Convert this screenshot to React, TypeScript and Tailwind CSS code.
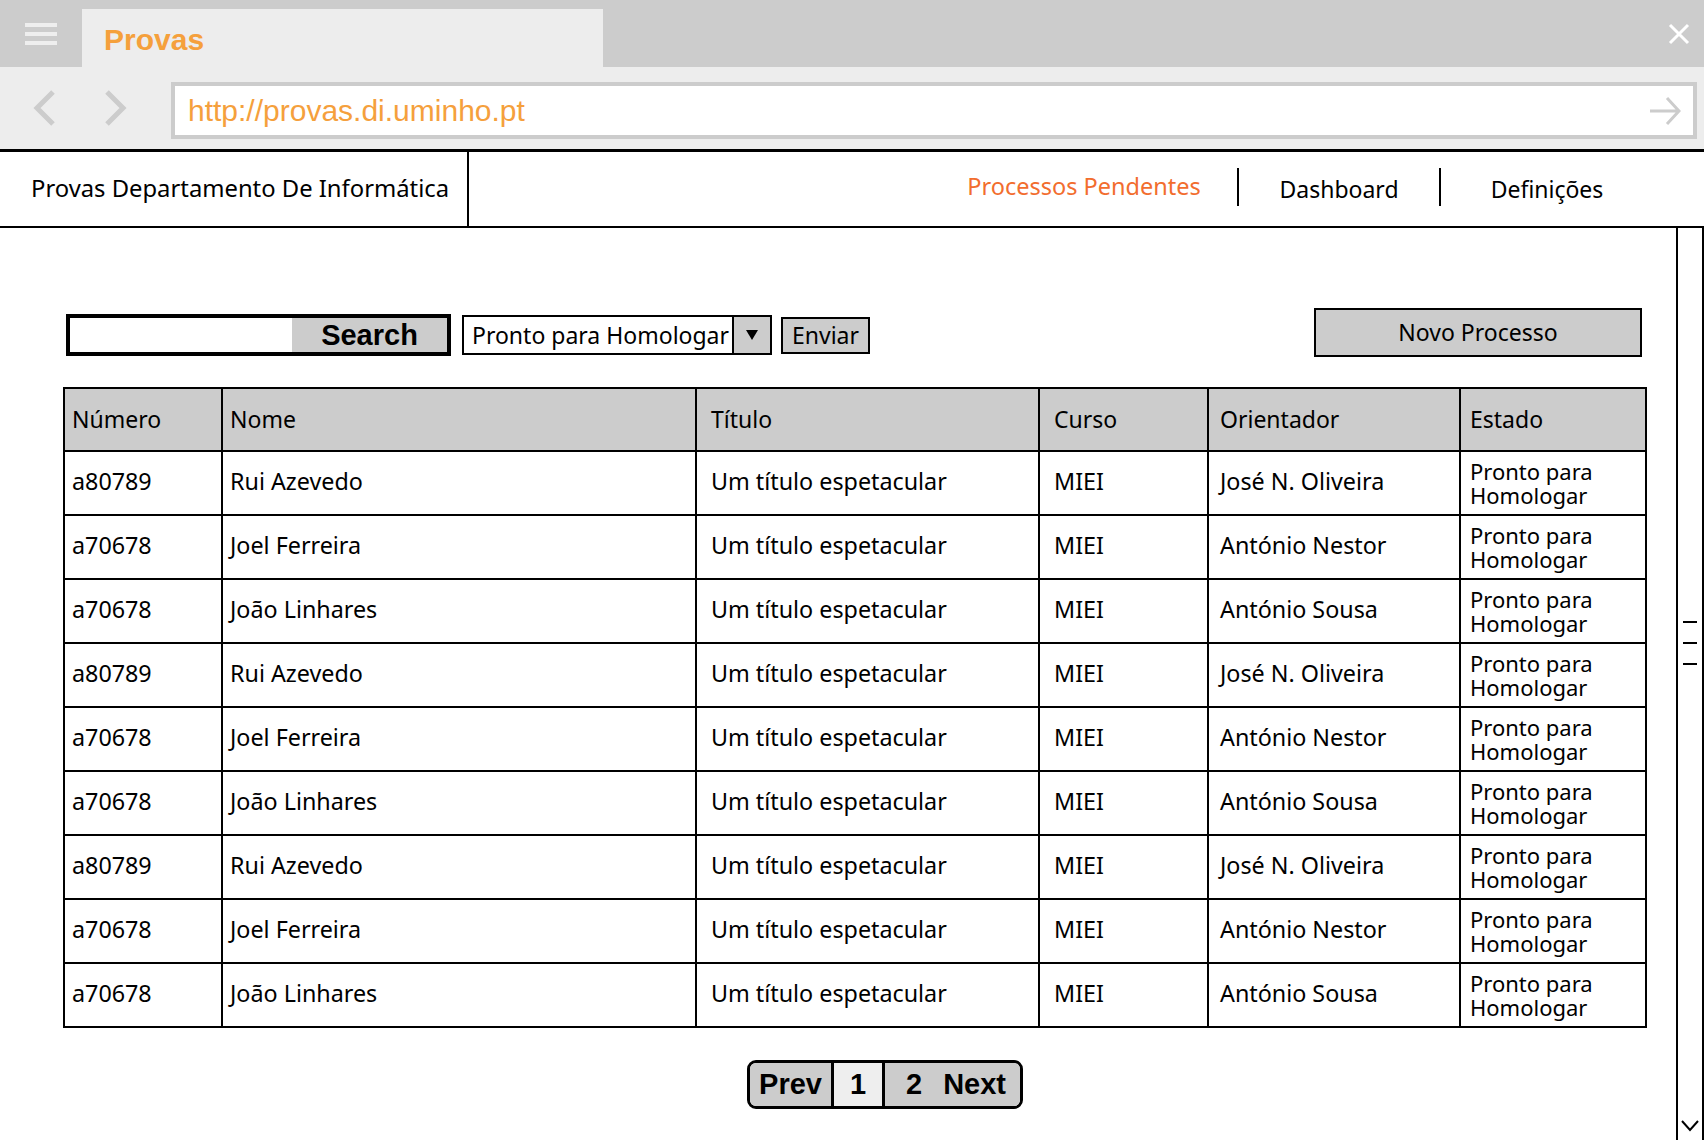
import React from "react";

const rows: [string, string, string][] = [
  ["a80789", "Rui Azevedo", "José N. Oliveira"],
  ["a70678", "Joel Ferreira", "António Nestor"],
  ["a70678", "João Linhares", "António Sousa"],
  ["a80789", "Rui Azevedo", "José N. Oliveira"],
  ["a70678", "Joel Ferreira", "António Nestor"],
  ["a70678", "João Linhares", "António Sousa"],
  ["a80789", "Rui Azevedo", "José N. Oliveira"],
  ["a70678", "Joel Ferreira", "António Nestor"],
  ["a70678", "João Linhares", "António Sousa"],
];

const colW = ["w-[158px]", "w-[474px]", "w-[343px]", "w-[169px]", "w-[252px]", "w-[186px]"];
const colPad = ["pl-[7px]", "pl-[7px]", "pl-[14px]", "pl-[14px]", "pl-[11px]", "pl-[9px]"];

export default function App() {
  return (
    <div className="w-[1704px] h-[1140px] overflow-hidden bg-white flex flex-col font-['Noto_Sans',sans-serif] text-black">
      {/* Title bar */}
      <div className="h-[67px] bg-[#cccccc] flex shrink-0">
        <div className="w-[82px] flex items-center justify-center">
          <svg width="34" height="26" viewBox="0 0 34 26">
            <rect x="1" y="2" width="32" height="4" fill="#eeeeee" />
            <rect x="1" y="11" width="32" height="4" fill="#eeeeee" />
            <rect x="1" y="20" width="32" height="4" fill="#eeeeee" />
          </svg>
        </div>
        <div className="mt-[9px] w-[521px] bg-[#ededed] flex items-center pl-[22px]">
          <span className="font-['Liberation_Sans',Arial,sans-serif] font-bold text-[30px] text-[#f5a03c] leading-none mt-[4px]">
            Provas
          </span>
        </div>
        <div className="flex-1 flex items-center justify-end pr-[14px]">
          <svg width="22" height="22" viewBox="0 0 22 22">
            <path d="M2 2 L20 20 M20 2 L2 20" stroke="#ffffff" strokeWidth="3" fill="none" />
          </svg>
        </div>
      </div>

      {/* Address bar */}
      <div className="h-[85px] bg-[#ededed] border-b-[3px] border-black flex items-start shrink-0">
        <div className="w-[171px] h-[82px] flex items-center">
          <svg className="ml-[32px]" width="24" height="38" viewBox="0 0 24 38">
            <polyline points="21,3 5,19 21,35" stroke="#cccccc" strokeWidth="5" fill="none" />
          </svg>
          <svg className="ml-[48px]" width="24" height="38" viewBox="0 0 24 38">
            <polyline points="3,3 19,19 3,35" stroke="#cccccc" strokeWidth="5" fill="none" />
          </svg>
        </div>
        <div className="mt-[15px] w-[1526px] h-[57px] bg-white border-[4px] border-[#cccccc] flex items-center pl-[13px] pr-[12px]">
          <span className="font-['Liberation_Sans',Arial,sans-serif] text-[30px] text-[#f5a03c] leading-none flex-1">
            http://provas.di.uminho.pt
          </span>
          <svg width="32" height="30" viewBox="0 0 32 30">
            <path d="M1 15 L30 15 M18 2 L30 15 L18 28" stroke="#cccccc" strokeWidth="3" fill="none" />
          </svg>
        </div>
      </div>

      {/* Nav */}
      <div className="h-[76px] border-b-2 border-black flex items-stretch shrink-0">
        <div className="w-[469px] border-r-2 border-black flex items-center pl-[31px]">
          <span className="text-[23.8px] leading-none whitespace-nowrap">Provas Departamento De Informática</span>
        </div>
        <div className="flex-1" />
        <div className="w-[306px] flex items-center justify-center">
          <span className="text-[23.5px] leading-none text-[#f26d2e] -mt-[4px] whitespace-nowrap">Processos Pendentes</span>
        </div>
        <div className="flex items-center">
          <div className="w-[2px] h-[38px] bg-black -mt-[4px]" />
        </div>
        <div className="w-[200px] flex items-center justify-center">
          <span className="text-[23px] leading-none">Dashboard</span>
        </div>
        <div className="flex items-center">
          <div className="w-[2px] h-[38px] bg-black -mt-[4px]" />
        </div>
        <div className="w-[212px] flex items-center justify-center">
          <span className="text-[23px] leading-none">Definições</span>
        </div>
        <div className="w-[51px]" />
      </div>

      {/* Content */}
      <div className="flex-1 flex min-h-0">
        <div className="flex-1 pl-[63px] pt-[80px] flex flex-col">
          {/* Controls */}
          <div className="flex items-end w-[1582px]">
            <div className="ml-[3px] mb-[1px] w-[385px] h-[42px] border-[4px] border-black flex">
              <div className="flex-1 bg-white" />
              <div className="w-[155px] bg-[#cccccc] flex items-center justify-center">
                <span className="font-['Liberation_Sans',Arial,sans-serif] font-bold text-[29px] leading-none">Search</span>
              </div>
            </div>
            <div className="ml-[11px] mb-[2px] w-[310px] h-[40px] border-2 border-black flex">
              <div className="flex-1 flex items-center pl-[8px] bg-white">
                <span className="text-[23px] leading-none whitespace-nowrap">Pronto para Homologar</span>
              </div>
              <div className="w-[38px] border-l-2 border-black bg-[#cccccc] flex items-center justify-center">
                <svg width="12" height="12" viewBox="0 0 12 12">
                  <path d="M0 1 L12 1 L6 11 Z" fill="#000000" />
                </svg>
              </div>
            </div>
            <div className="ml-[9px] mb-[3px] w-[89px] h-[37px] border-2 border-black bg-[#cccccc] flex items-center justify-center">
              <span className="text-[23px] leading-none">Enviar</span>
            </div>
            <div className="flex-1" />
            <div className="mr-[3px] w-[328px] h-[49px] border-2 border-black bg-[#cccccc] flex items-center justify-center">
              <span className="text-[23px] leading-none">Novo Processo</span>
            </div>
          </div>

          {/* Table */}
          <table className="mt-[30px] w-[1582px] border-collapse border-2 border-black table-fixed">
            <colgroup>
              {colW.map((w, i) => (
                <col key={i} className={w} />
              ))}
            </colgroup>
            <thead>
              <tr className="h-[63px] bg-[#cccccc]">
                {["Número", "Nome", "Título", "Curso", "Orientador", "Estado"].map((h, i) => (
                  <th key={h} className={`border-2 border-black text-left font-normal text-[23px] leading-none ${colPad[i]}`}>
                    {h}
                  </th>
                ))}
              </tr>
            </thead>
            <tbody>
              {rows.map((r, ri) => (
                <tr key={ri} className="h-[64px]">
                  {[r[0], r[1], "Um título espetacular", "MIEI", r[2]].map((c, i) => (
                    <td key={i} className={`border-2 border-black text-[23.3px] leading-none whitespace-nowrap pb-[3px] ${colPad[i]}`}>
                      {c}
                    </td>
                  ))}
                  <td className={`border-2 border-black text-[22px] leading-[24px] ${colPad[5]}`}>
                    Pronto para
                    <br />
                    Homologar
                  </td>
                </tr>
              ))}
            </tbody>
          </table>

          {/* Pagination */}
          <div className="mt-[32px] ml-[684px] flex">
            <div className="h-[49px] border-[3px] border-black rounded-[9px] overflow-hidden flex font-['Liberation_Sans',Arial,sans-serif] font-bold text-[29px] leading-none">
              <div className="w-[84px] bg-[#cccccc] flex items-center justify-center border-r-[3px] border-black">Prev</div>
              <div className="w-[51px] bg-[#eeeeee] flex items-center justify-center border-r-[3px] border-black">1</div>
              <div className="w-[135px] bg-[#cccccc] flex items-center pl-[21px] gap-[21px]">
                <span>2</span>
                <span>Next</span>
              </div>
            </div>
          </div>
        </div>

        {/* Scrollbar */}
        <div className="w-[28px] border-l-2 border-r-2 border-black flex flex-col items-center">
          <div className="flex-1 flex flex-col items-center justify-center gap-[19px] mb-[62px]">
            <div className="w-[14px] h-[2px] bg-black" />
            <div className="w-[14px] h-[2px] bg-black" />
            <div className="w-[14px] h-[2px] bg-black" />
          </div>
          <svg className="mb-[8px]" width="18" height="12" viewBox="0 0 18 12">
            <polyline points="1,1 9,10 17,1" stroke="#000000" strokeWidth="2" fill="none" />
          </svg>
        </div>
      </div>
    </div>
  );
}
